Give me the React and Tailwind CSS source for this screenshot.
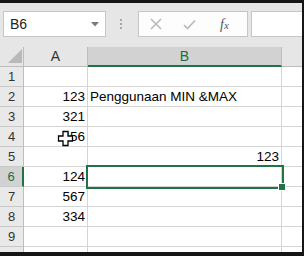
import React from "react";

const F = { fontFamily: '"Liberation Sans", Arial, sans-serif' };

const rows = [
  { n: "1", a: "", b: "" },
  { n: "2", a: "123", b: "Penggunaan MIN &MAX" },
  { n: "3", a: "321", b: "" },
  { n: "4", a: "456", b: "" },
  { n: "5", a: "", b: "", bNum: "123" },
  { n: "6", a: "124", b: "", sel: true },
  { n: "7", a: "567", b: "" },
  { n: "8", a: "334", b: "" },
  { n: "9", a: "", b: "" },
  { n: "", a: "", b: "" },
];

function Row({ r }) {
  return (
    <div className="flex h-[20px] shrink-0">
      <div
        className={
          "w-[24px] shrink-0 flex items-center justify-center text-[13px] border-b border-b-[#c8c8c8] " +
          (r.sel
            ? "bg-[#d2d2d2] text-[#1e6b41] border-r-2 border-r-[#217346]"
            : "bg-[#e9e9e9] text-[#333] border-r border-r-[#bdbdbd]")
        }
      >
        {r.n}
      </div>
      <div className="w-[64px] shrink-0 border-r border-b border-[#d4d4d4] bg-white flex items-end justify-end pr-[2px] pb-[2px] text-[13.5px] leading-[15px] text-black">
        {r.a}
      </div>
      <div className="w-[194px] shrink-0 border-r border-b border-[#d4d4d4] bg-white flex items-end pb-[2px] text-[13.5px] leading-[15px] text-black">
        {r.b ? <span className="pl-[2px] whitespace-nowrap">{r.b}</span> : null}
        {r.bNum ? <span className="ml-auto pr-[2px]">{r.bNum}</span> : null}
      </div>
      <div className="flex-1 border-b border-[#d4d4d4] bg-white" />
    </div>
  );
}

export default function App() {
  return (
    <div className="w-[304px] h-[256px] bg-[#161616] pt-[3px] pr-[2px] pb-[4px]" style={F}>
      <div className="relative w-full h-full bg-white overflow-hidden flex flex-col">
        {/* toolbar */}
        <div className="h-[44px] shrink-0 bg-[#e6e6e6] flex items-start pt-[8px] pl-[3px]">
          <div className="w-[103px] h-[26px] bg-white border border-[#c6c6c6] flex items-center pl-[6px] pr-[6px]">
            <span className="text-[14px] text-[#222]">B6</span>
            <svg className="ml-auto" width="8" height="5" viewBox="0 0 8 5">
              <path d="M0 0 H8 L4 4.5 Z" fill="#7a7a7a" />
            </svg>
          </div>
          <div className="w-[30px] h-[26px] flex flex-col items-center justify-center gap-[2px]">
            <div className="w-[2px] h-[2px] bg-[#a8a8a8]" />
            <div className="w-[2px] h-[2px] bg-[#a8a8a8]" />
            <div className="w-[2px] h-[2px] bg-[#a8a8a8]" />
          </div>
          <div className="ml-[2px] w-[110px] h-[26px] bg-[#fdfdfd] border border-[#c6c6c6] flex items-center">
            <svg className="ml-[11px]" width="12" height="12" viewBox="0 0 12 12">
              <path d="M1 1 L11 11 M11 1 L1 11" stroke="#b8b8b8" strokeWidth="1.5" />
            </svg>
            <svg className="ml-[21px]" width="13" height="11" viewBox="0 0 13 11">
              <path d="M1 6 L4.5 9.5 L12 1.5" stroke="#b8b8b8" strokeWidth="1.6" fill="none" />
            </svg>
            <span
              className="ml-[24px] text-[14px] italic text-[#555]"
              style={{ fontFamily: '"Liberation Serif", "Times New Roman", serif' }}
            >
              f<span className="text-[11px]">x</span>
            </span>
          </div>
          <div className="ml-[3px] flex-1 mr-[-4px] h-[26px] bg-white border border-[#c6c6c6]" />
        </div>

        {/* column headers */}
        <div className="flex h-[20px] shrink-0 bg-[#e6e6e6]">
          <div className="w-[24px] shrink-0 border-r border-b border-[#bdbdbd] relative">
            <svg className="absolute left-[8px] top-[2px]" width="14" height="14" viewBox="0 0 14 14">
              <path d="M14 0 V14 H0 Z" fill="#b9b9b9" />
            </svg>
          </div>
          <div className="w-[64px] shrink-0 border-r border-b border-[#bdbdbd] flex items-center justify-center text-[14px] text-[#333]">
            A
          </div>
          <div className="w-[194px] shrink-0 bg-[#d2d2d2] border-r border-r-[#bdbdbd] border-b-2 border-b-[#217346] flex items-center justify-center text-[14px] text-[#1e6b41]">
            B
          </div>
          <div className="flex-1 border-b border-[#bdbdbd]" />
        </div>

        {rows.map((r, i) => (
          <Row key={i} r={r} />
        ))}

        {/* selection */}
        <div className="absolute left-[86px] top-[162px] w-[198px] h-[24px] border-2 border-[#217346]" />
        <div className="absolute left-[278px] top-[180px] w-[8px] h-[8px] bg-white" />
        <div className="absolute left-[279px] top-[181px] w-[6px] h-[6px] bg-[#217346]" />

        {/* cursor */}
        <svg className="absolute left-[57px] top-[127px]" width="17" height="17" viewBox="0 0 17 17">
          <path
            d="M6 1.5 H11 V6 H15.5 V11 H11 V15.5 H6 V11 H1.5 V6 H6 Z"
            fill="white"
            stroke="black"
            strokeWidth="1.3"
          />
        </svg>
      </div>
    </div>
  );
}
